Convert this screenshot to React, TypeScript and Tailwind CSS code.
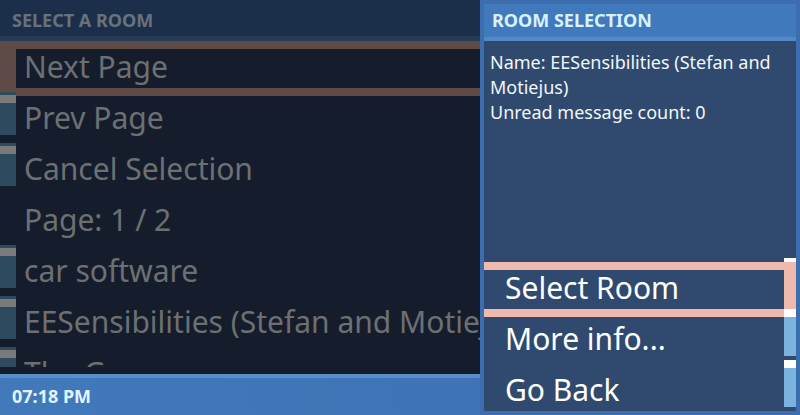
const rows = [
  { label: 'Next Page', selected: true, marker: false },
  { label: 'Prev Page', selected: false, marker: true },
  { label: 'Cancel Selection', selected: false, marker: true },
  { label: 'Page: 1 / 2', selected: false, marker: false },
  { label: 'car software', selected: false, marker: true },
  { label: 'EESensibilities (Stefan and Motiejus)', selected: false, marker: true },
  { label: 'The Group', selected: false, marker: true },
]

function RoomRow({ label, selected, marker }: { label: string; selected: boolean; marker: boolean }) {
  return (
    <div className="relative flex h-[51px] shrink-0 items-center">
      {selected && (
        <div className="absolute left-0 top-0 z-10 h-[55px] w-full border-y-[8px] border-l-[16px] border-[#5f4b45]" />
      )}
      {marker && (
        <div className="absolute left-0 top-0 z-20 flex h-[43px] w-[16px] flex-col bg-[#2e4a5e]">
          <div className="mt-[3px] h-[8px] bg-[#7a7a7a]" />
        </div>
      )}
      <span className="relative z-20 whitespace-nowrap pl-[24px] text-[30px] leading-none text-[#6d7073]">
        {label}
      </span>
    </div>
  )
}

function DialogButton({ label, selected }: { label: string; selected?: boolean }) {
  return (
    <div className="relative flex h-[51px] shrink-0 items-center">
      {selected && <div className="absolute left-0 top-0 z-10 h-[55px] w-full border-y-[8px] border-[#efbaae]" />}
      <span className="relative z-20 pl-[21px] text-[30px] leading-none text-white">{label}</span>
    </div>
  )
}

export default function App() {
  return (
    <div className="relative h-[415px] w-[800px] overflow-hidden bg-[#151d2c] font-['Noto_Sans',sans-serif]">
      <div className="isolate flex h-full flex-col">
        <div className="flex h-[36px] shrink-0 items-center bg-[#1b2f4b] pl-[12px] pt-[4px]">
          <span className="text-[18px] font-bold text-[#68727c]">SELECT A ROOM</span>
        </div>
        <div className="h-[5px] shrink-0 bg-[#253a55]" />
        <div className="flex min-h-0 flex-1 flex-col pb-[7px]">
          <div className="flex min-h-0 flex-1 flex-col overflow-hidden">
            {rows.map((r) => (
              <RoomRow key={r.label} {...r} />
            ))}
          </div>
        </div>
        <div className="flex h-[41px] shrink-0 flex-col bg-gradient-to-r from-[#4279ba] to-[#3d6fb2]">
          <div className="h-[4px] bg-[#5a8ecb]" />
          <div className="flex flex-1 items-center pl-[12px]">
            <span className="text-[18px] font-bold text-[#e2f5ff]">07:18 PM</span>
          </div>
        </div>
      </div>

      <div className="absolute left-[480px] top-0 z-30 flex h-[415px] w-[320px] flex-col bg-[#3b6daf] p-[4px]">
        <div className="flex h-[33px] shrink-0 items-center bg-[#4179bd] pl-[8px]">
          <span className="text-[18px] font-bold text-[#d6f3ff]">ROOM SELECTION</span>
        </div>
        <div className="h-[4px] shrink-0 bg-[#5489c6]" />
        <div className="isolate flex min-h-0 flex-1 flex-col bg-[#2f4a6e]">
          <div className="flex-1 pl-[6px] pr-[12px] pt-[9px] text-[18px] leading-[25px] text-[#f4f6f8]">
            <p>Name: EESensibilities (Stefan and Motiejus)</p>
            <p>Unread message count: 0</p>
          </div>
          <div className="flex h-[153px] shrink-0">
            <div className="flex flex-1 flex-col overflow-hidden pt-[4px]">
              <DialogButton label="Select Room" selected />
              <DialogButton label="More info..." />
              <DialogButton label="Go Back" />
            </div>
            <div className="flex w-[12px] flex-col">
              <div className="h-[4px] bg-white" />
              <div className="h-[47px] bg-[#efbaae]" />
              <div className="h-[8px] bg-white" />
              <div className="h-[39px] bg-[#7ab3de]" />
              <div className="h-[4px]" />
              <div className="h-[8px] bg-white" />
              <div className="h-[39px] bg-[#7ab3de]" />
            </div>
          </div>
        </div>
      </div>
    </div>
  )
}
